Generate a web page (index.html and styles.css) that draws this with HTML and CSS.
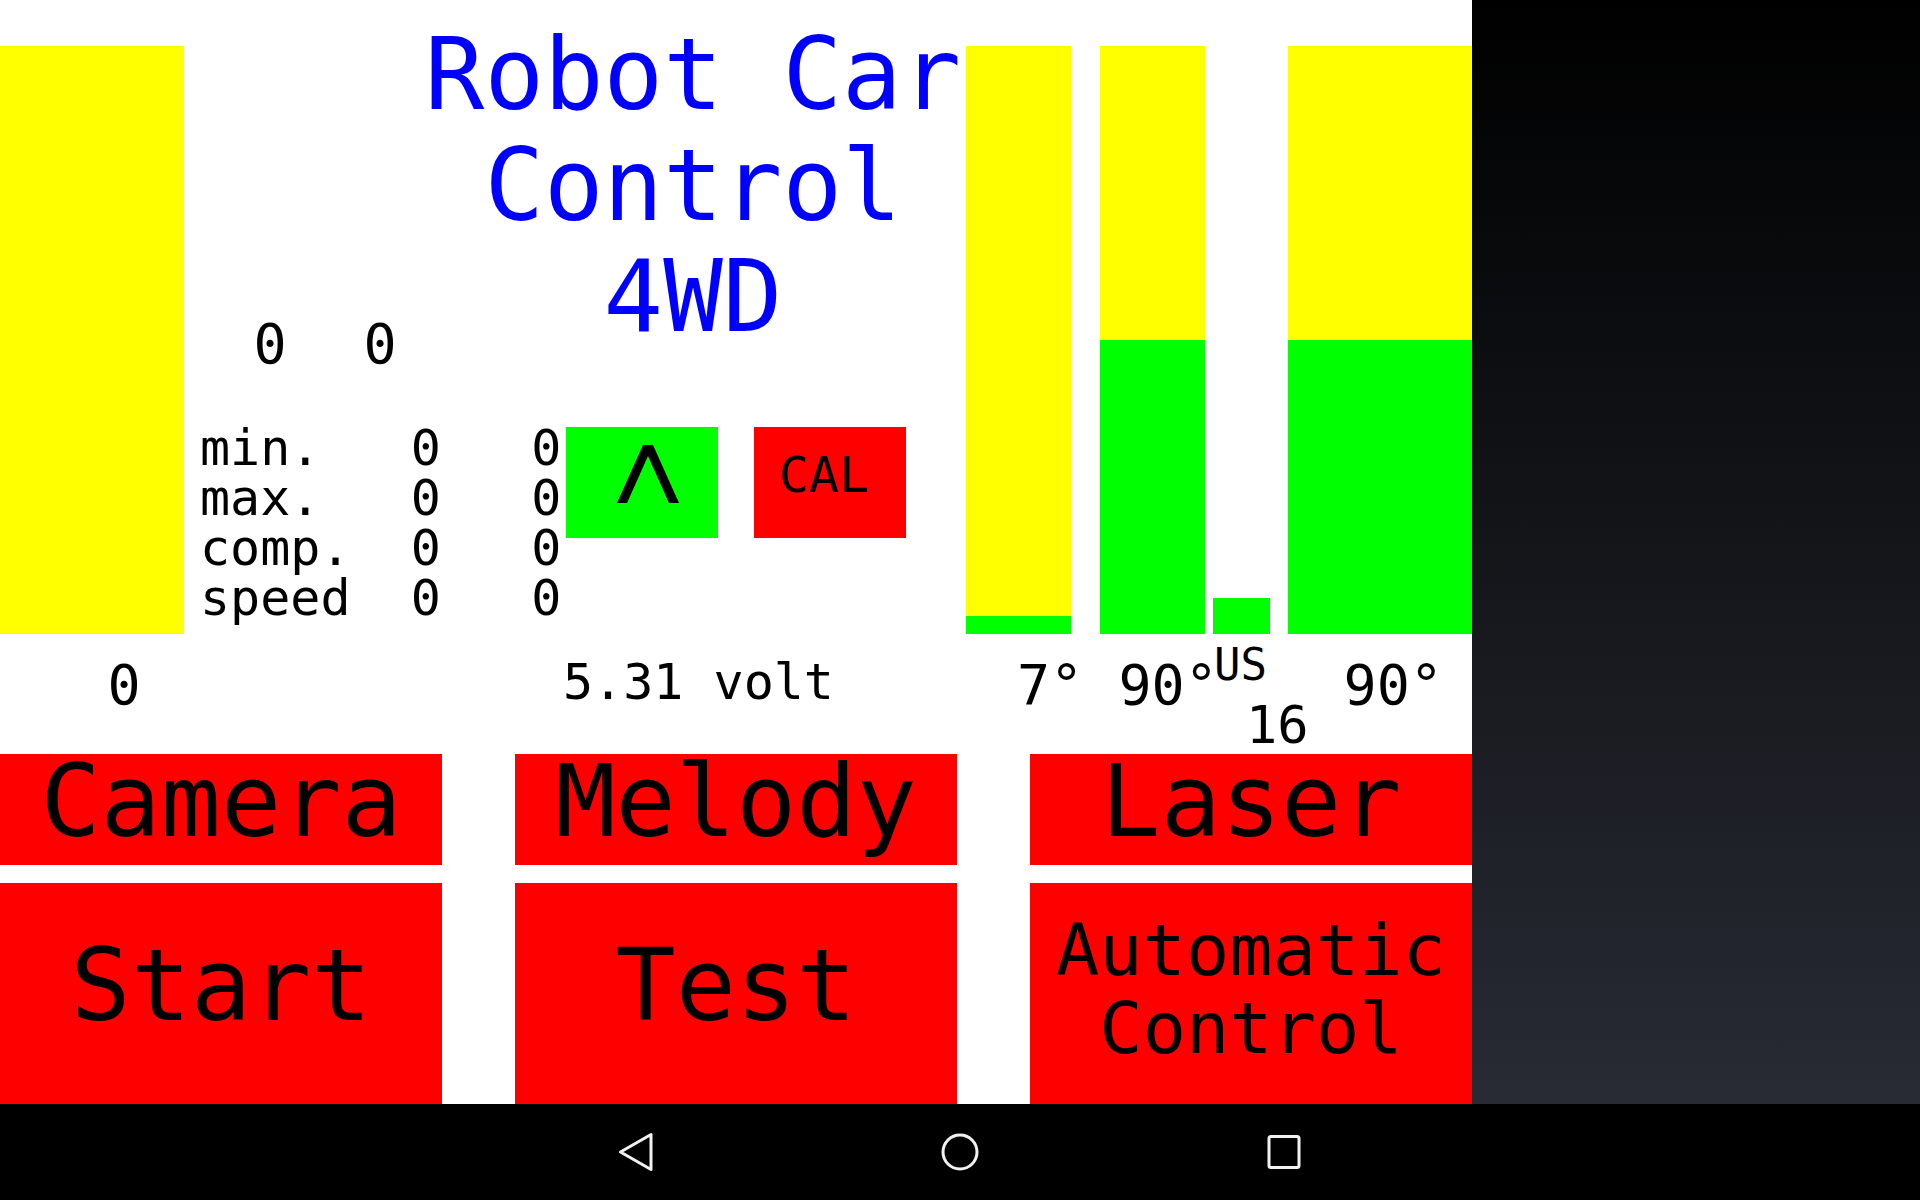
FILE: index.html
```html
<!DOCTYPE html>
<html lang="en">
<head>
<meta charset="utf-8">
<title>Robot Car Control 4WD</title>
<link rel="stylesheet" href="styles.css">
</head>
<body>
<div class="screen">
  <main class="app">
    <section class="gauges">
      <div class="bar bar-left"><div class="fill" style="height:0px"></div></div>
      <div class="center">
        <div class="head">
          <div class="counts"><span>0</span><span class="count-2">0</span></div>
          <h1 class="title">Robot Car<br>Control<br>4WD</h1>
        </div>
        <div class="controls">
          <div class="stats">min.   0   0
max.   0   0
comp.  0   0
speed  0   0</div>
          <div class="btn-up">
            <svg width="152" height="111" viewBox="0 0 152 111"><polygon points="51,76 77,18 87,18 113,76 103,76 82,29 61,76" fill="#000"/></svg>
          </div>
          <div class="btn-cal">CAL</div>
        </div>
      </div>
      <div class="bar bar-servo"><div class="fill" style="height:18px"></div></div>
      <div class="bar bar-servo2"><div class="fill" style="height:294px"></div></div>
      <div class="bar bar-us"><div class="fill" style="height:36px"></div></div>
      <div class="bar bar-right"><div class="fill" style="height:294px"></div></div>
    </section>
    <section class="labels">
      <span class="lbl lbl-zero">0</span>
      <span class="lbl lbl-volt">5.31 volt</span>
      <span class="lbl lbl-a">7°</span>
      <span class="lbl lbl-b">90°</span>
      <div class="us-stack">
        <span class="lbl-us">US</span>
        <span class="lbl-dist">16</span>
      </div>
      <span class="lbl lbl-c">90°</span>
    </section>
    <section class="buttons">
      <div class="btn btn-small">Camera</div>
      <div class="btn btn-small">Melody</div>
      <div class="btn btn-small">Laser</div>
      <div class="btn btn-big">Start</div>
      <div class="btn btn-big">Test</div>
      <div class="btn btn-auto">Automatic<br>Control</div>
    </section>
  </main>
  <aside class="side"></aside>
</div>
<nav class="navbar">
  <svg class="nav-icon" width="40" height="40" viewBox="0 0 40 40"><path d="M35 2.5 L35 37.5 L4.5 20 Z" fill="none" stroke="#f2f2f2" stroke-width="3" stroke-linejoin="round"/></svg>
  <svg class="nav-icon" width="40" height="40" viewBox="0 0 40 40"><circle cx="20" cy="20" r="17" fill="none" stroke="#f2f2f2" stroke-width="3"/></svg>
  <svg class="nav-icon" width="40" height="40" viewBox="0 0 40 40"><rect x="5" y="4.5" width="30" height="31" rx="2" fill="none" stroke="#f2f2f2" stroke-width="3"/></svg>
</nav>
</body>
</html>
```

FILE: styles.css
```css
* {
  box-sizing: border-box;
}

html, body {
  margin: 0;
  padding: 0;
  width: 1920px;
  height: 1200px;
  overflow: hidden;
  background: #000;
}

body {
  font-family: "DejaVu Sans Mono", "Liberation Mono", monospace;
  color: #000;
}

.screen {
  display: flex;
  height: 1104px;
}

.app {
  width: 1472px;
  flex: none;
  background: #fff;
  display: flex;
  flex-direction: column;
}

.side {
  flex: 1;
  background: linear-gradient(#000000, #282b34);
}

/* ---------- gauges ---------- */
.gauges {
  display: flex;
  align-items: flex-start;
  height: 634px;
}

.bar {
  position: relative;
  z-index: 1;
  flex: none;
  margin-top: 46px;
  height: 588px;
  background: #ffff00;
  display: flex;
  flex-direction: column;
  justify-content: flex-end;
}

.fill {
  background: #00ff00;
  width: 100%;
}

.bar-left { width: 184px; }
.bar-servo { width: 105px; }
.bar-servo2 { width: 105px; margin-left: 29px; }
.bar-us { width: 57px; margin-left: 8px; background: transparent; }
.bar-right { width: 184px; margin-left: 18px; }

.center {
  width: 782px;
  flex: none;
  height: 634px;
}

.head {
  display: grid;
  grid-template-columns: 209px 600px;
  height: 422px;
}

.counts {
  display: flex;
  align-self: start;
  margin-top: 316.5px;
  font-size: 55px;
  line-height: 55px;
}

.counts span:first-child {
  margin-left: 69.5px;
}

.count-2 {
  margin-left: 76.9px;
}

.title {
  margin: 0;
  padding-top: 19px;
  font-family: "DejaVu Sans Mono", monospace;
  font-weight: normal;
  font-size: 99px;
  line-height: 111px;
  text-align: center;
  color: #0000ff;
  white-space: nowrap;
}

.controls {
  display: flex;
  align-items: flex-start;
  padding-left: 16px;
}

.stats {
  width: 366px;
  font-size: 50px;
  line-height: 50.33px;
  white-space: pre;
  margin-top: 0.5px;
}

.btn-up {
  width: 152px;
  height: 111px;
  margin-top: 5px;
  background: #00ff00;
}

.btn-up svg {
  display: block;
}

.btn-cal {
  width: 152px;
  height: 111px;
  margin-top: 5px;
  margin-left: 36px;
  background: #ff0000;
  font-size: 50px;
  line-height: 50px;
  padding-top: 22.7px;
  padding-left: 25px;
}

/* ---------- labels ---------- */
.labels {
  display: flex;
  align-items: flex-start;
  height: 120px;
  white-space: pre;
}

.lbl {
  font-size: 55px;
  line-height: 55px;
  margin-top: 23.5px;
}

.lbl-zero { margin-left: 107.5px; }
.lbl-volt {
  font-size: 50px;
  line-height: 50px;
  margin-top: 22.7px;
  margin-left: 422.4px;
}
.lbl-a { margin-left: 183px; }
.lbl-b { margin-left: 35.3px; }

.us-stack {
  display: flex;
  flex-direction: column;
  align-items: flex-start;
  margin-left: -3.8px;
}

.lbl-us {
  font-size: 44px;
  line-height: 44px;
  margin-top: 8.8px;
}

.lbl-dist {
  font-size: 52px;
  line-height: 52px;
  margin-top: 12.2px;
  margin-left: 32px;
}

.lbl-c { margin-left: 34.9px; }

/* ---------- buttons ---------- */
.buttons {
  display: grid;
  grid-template-columns: repeat(3, 442px);
  grid-template-rows: 111px 221px;
  column-gap: 73px;
  row-gap: 18px;
}

.btn {
  background: #ff0000;
  color: #000;
  text-align: center;
  white-space: nowrap;
}

.btn-small {
  font-size: 100px;
  line-height: 96px;
}

.btn-big {
  font-size: 100px;
  line-height: 100px;
  padding-top: 53.4px;
}

.btn-auto {
  font-size: 72px;
  line-height: 78px;
  padding-top: 28px;
}

/* ---------- navbar ---------- */
.navbar {
  height: 96px;
  background: #000;
  display: flex;
  justify-content: center;
  align-items: center;
  gap: 284px;
}

.nav-icon {
  display: block;
}
```
